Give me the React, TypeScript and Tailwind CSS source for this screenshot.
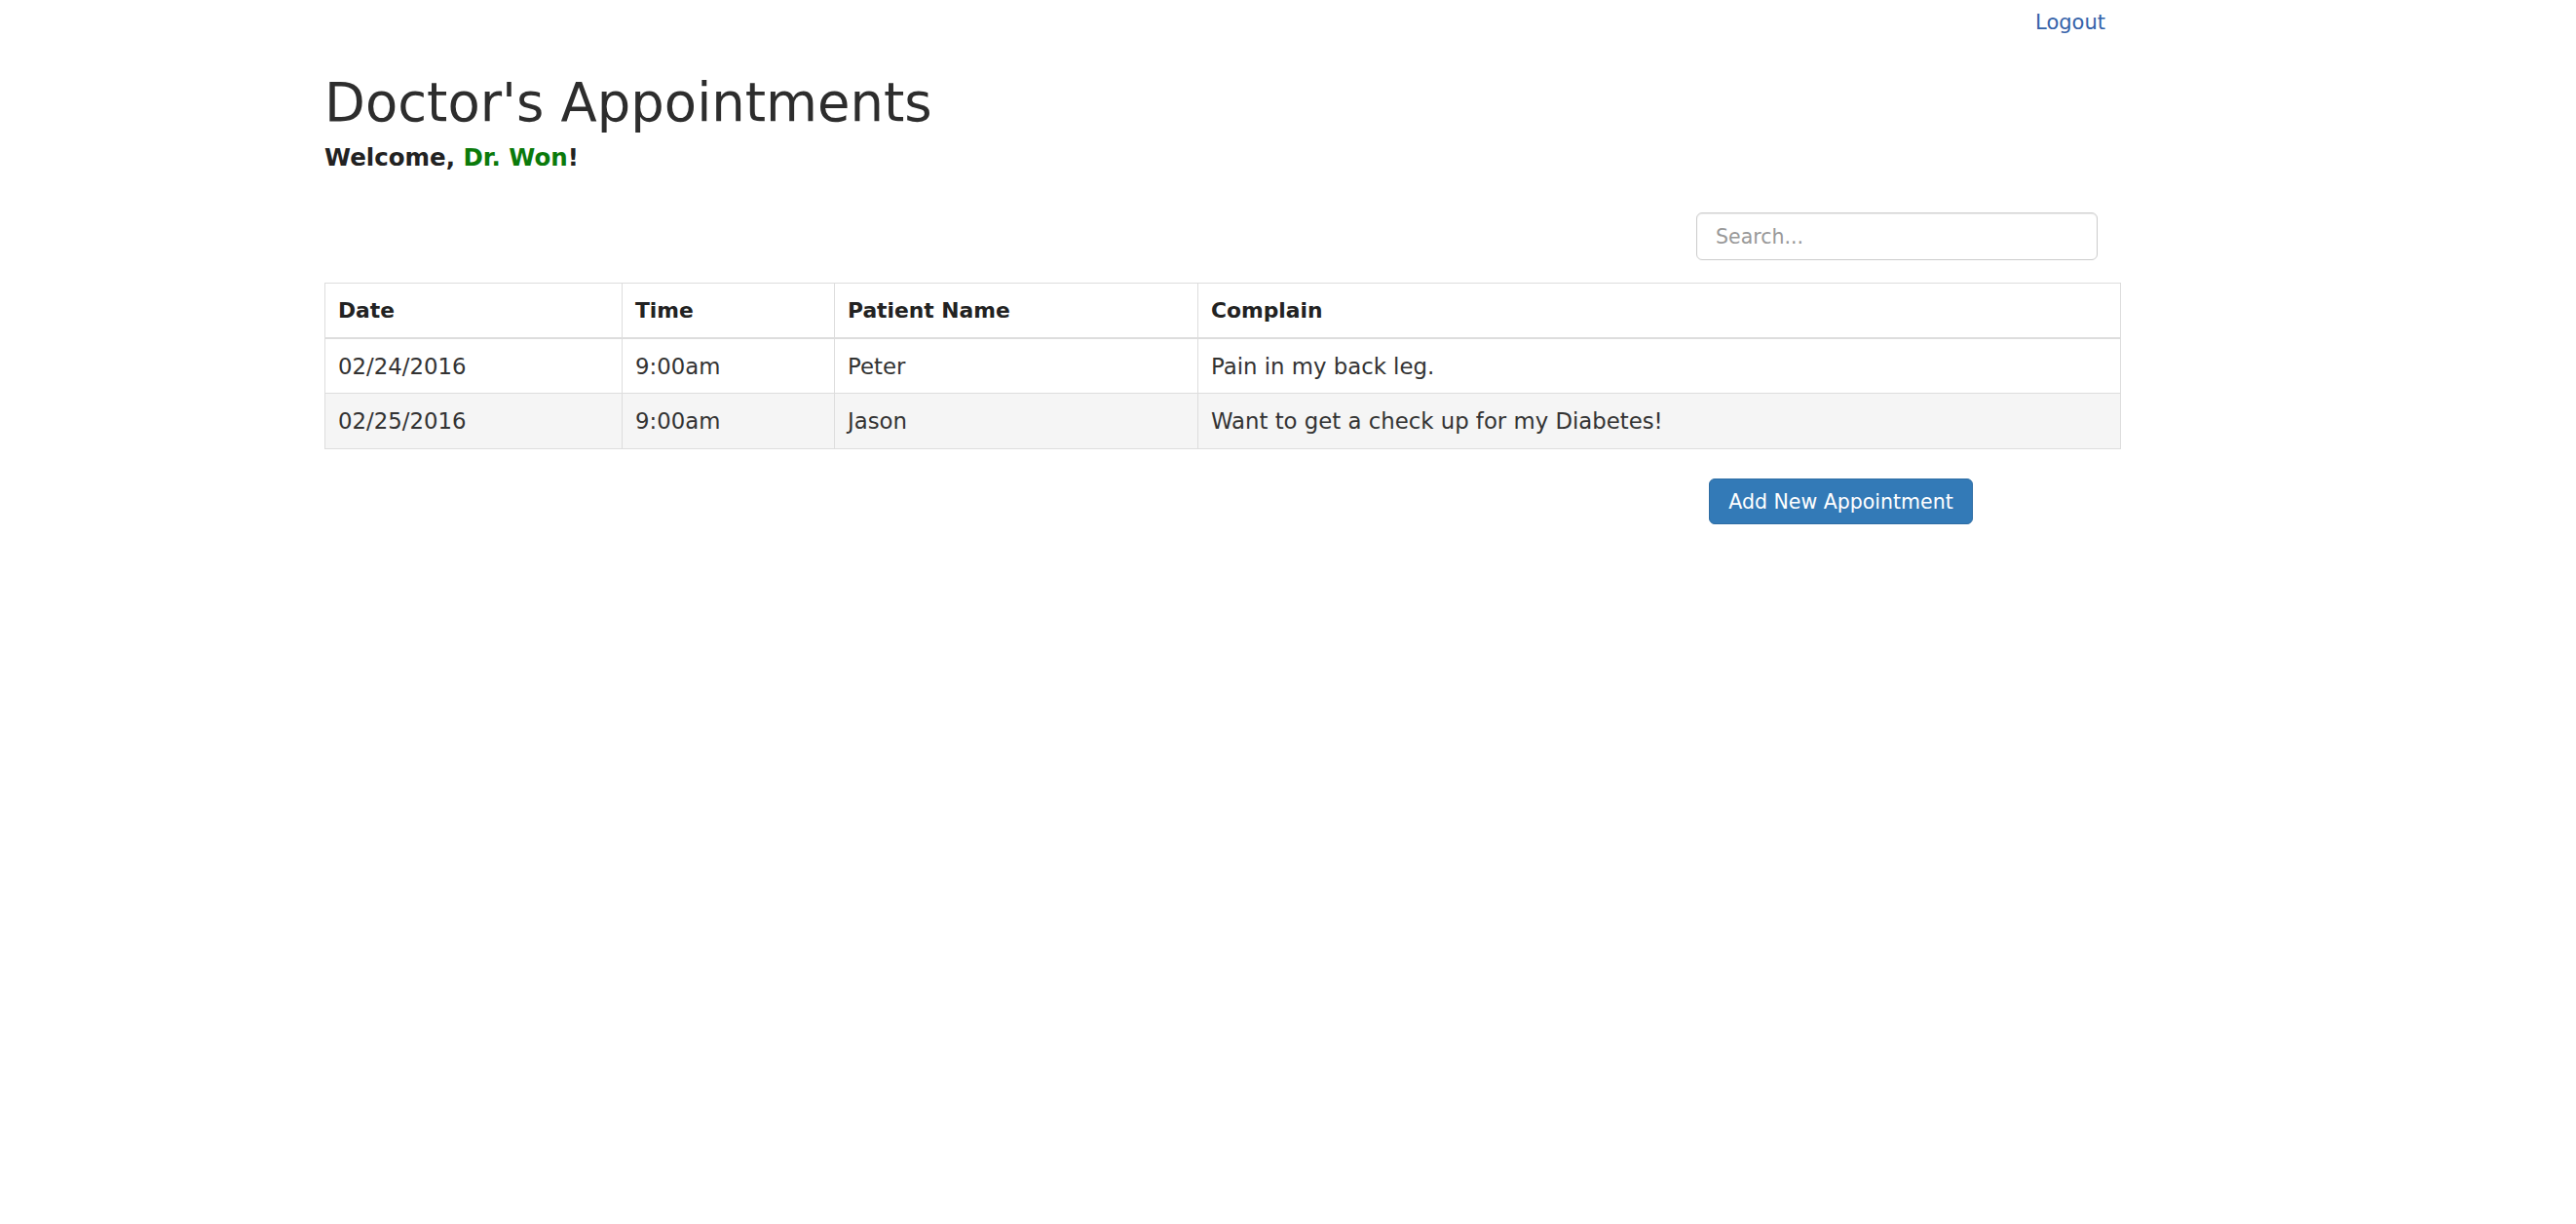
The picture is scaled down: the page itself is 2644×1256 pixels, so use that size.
import React from 'react';

type Appointment = {
  date: string;
  time: string;
  patient: string;
  complain: string;
};

const appointments: Appointment[] = [
  { date: '02/24/2016', time: '9:00am', patient: 'Peter', complain: 'Pain in my back leg.' },
  { date: '02/25/2016', time: '9:00am', patient: 'Jason', complain: 'Want to get a check up for my Diabetes!' },
];

const cols = 'grid grid-cols-[304px_218px_373px_1fr]';

const App: React.FC = () => {
  return (
    <div className="min-h-screen w-full bg-white font-['DejaVu_Sans',sans-serif] text-[#333]">
      <div className="ml-[333px] w-[1844px]">
        <div className="flex justify-end pt-[11px] pr-[16px]">
          <a href="#" className="text-[21px] leading-[24px] text-[#3562a9]">
            Logout
          </a>
        </div>

        <h1 className="mt-[44px] text-[54.4px] leading-none font-normal text-[#2d2d2d]">Doctor's Appointments</h1>
        <h4 className="mt-[14px] text-[24.5px] leading-[29px] font-bold text-[#222]">
          Welcome, <span className="text-[#0b7a0b]">Dr. Won</span>!
        </h4>

        <div className="mt-[42px] flex justify-end pr-[24px]">
          <input
            type="text"
            placeholder="Search..."
            className="h-[49px] w-[412px] rounded-[6px] border border-[#ccc] px-[19px] text-[20.5px] text-[#555] shadow-[inset_0_1px_1px_rgba(0,0,0,0.075)] outline-none placeholder:text-[#999]"
          />
        </div>

        <div className="mt-[23px] border border-[#ddd] text-[22.8px] leading-[26px]">
          <div className={`${cols} h-[57px] border-b-2 border-[#ddd] text-[21.8px] font-bold text-[#222]`}>
            <div className="flex items-center pl-[13px]">Date</div>
            <div className="flex items-center border-l border-[#ddd] pl-[13px]">Time</div>
            <div className="flex items-center border-l border-[#ddd] pl-[13px]">Patient Name</div>
            <div className="flex items-center border-l border-[#ddd] pl-[13px]">Complain</div>
          </div>
          {appointments.map((a, i) => (
            <div
              key={a.date}
              className={`${cols} ${i === 0 ? 'h-[56px] border-b border-[#ddd] bg-white' : 'h-[56px] bg-[#f5f5f5]'}`}
            >
              <div className="flex items-center pl-[13px]">{a.date}</div>
              <div className="flex items-center border-l border-[#ddd] pl-[13px]">{a.time}</div>
              <div className="flex items-center border-l border-[#ddd] pl-[13px]">{a.patient}</div>
              <div className="flex items-center border-l border-[#ddd] pl-[13px]">{a.complain}</div>
            </div>
          ))}
        </div>

        <div className="mt-[30px] flex justify-end pr-[152px]">
          <button className="h-[47px] w-[271px] rounded-[6px] border border-[#2e6da4] bg-[#337ab7] text-[20.5px] text-white">
            Add New Appointment
          </button>
        </div>
      </div>
    </div>
  );
};

export default App;
